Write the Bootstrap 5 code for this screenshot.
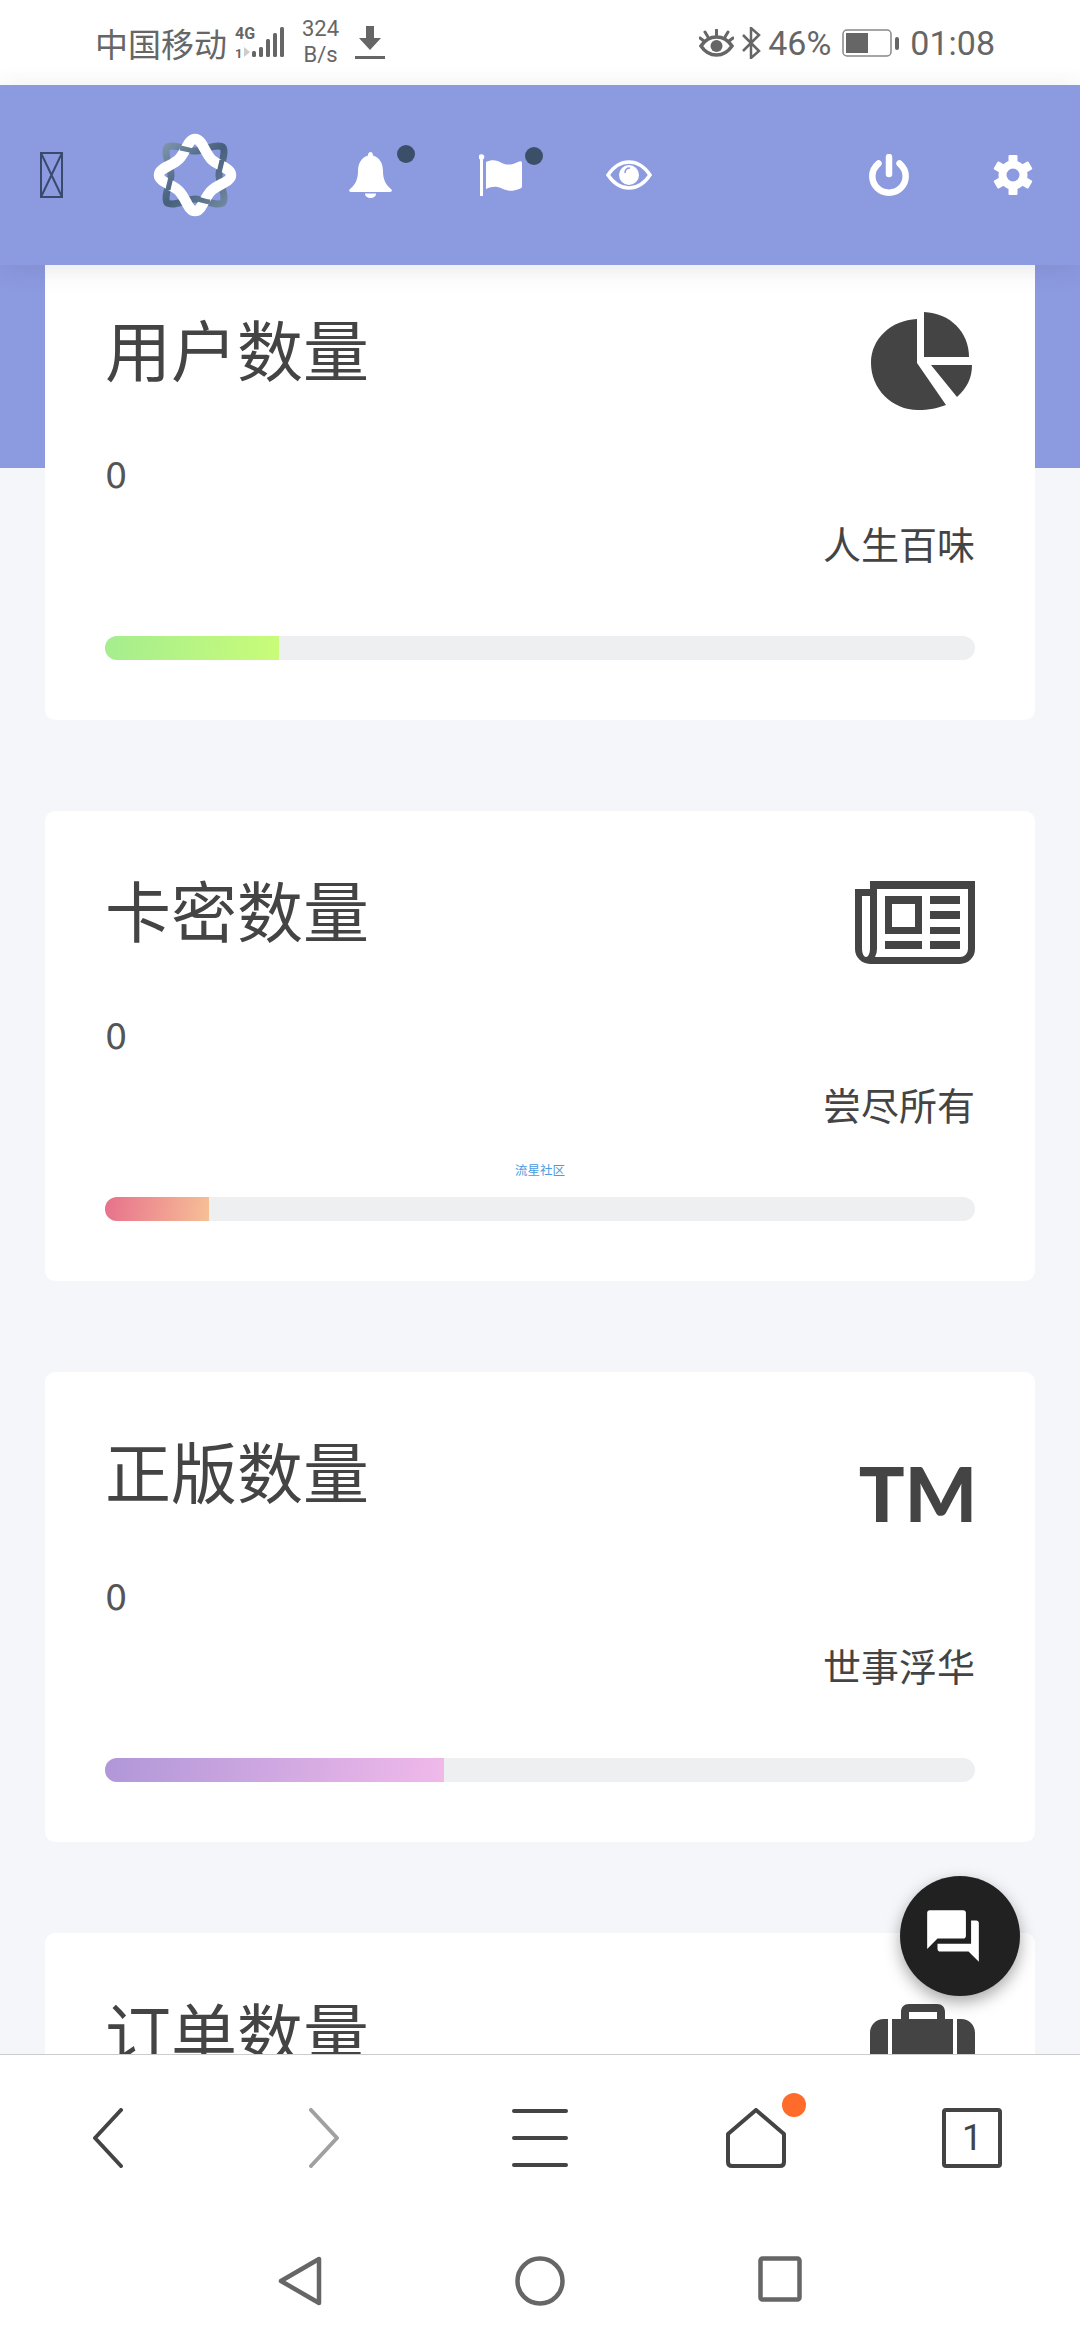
<!DOCTYPE html>
<html lang="zh-CN">
<head>
  <meta charset="UTF-8">
  <title>用户数量</title>
  <meta name="viewport" content="width=device-width, initial-scale=1">
  <link href="https://cdn.jsdelivr.net/npm/bootstrap@5.3.3/dist/css/bootstrap.min.css" rel="stylesheet">
  <style>
    body { font-family: "Noto Sans CJK SC", "Noto Sans", sans-serif; background: #fff; color: #444; }
    svg { display: block; }
    .phone { width: 1080px; height: 2340px; overflow: hidden; position: relative; }

    /* status bar */
    .status-bar { height: 85px; padding: 0 85px 0 95px; color: #666; background: #fff; font-family: Roboto, "Noto Sans CJK SC", sans-serif; font-size: 34px; }
    .carrier { font-family: "Noto Sans CJK SC", sans-serif; font-size: 33px; line-height: 48px; }
    .speed { font-size: 22px; line-height: 26px; text-align: center; margin: -2px 16px 0 17px; }
    .pct { margin: 0 11px 0 7px; line-height: 40px; }
    .clock { margin-left: 11px; line-height: 40px; }

    /* header */
    .top-head { height: 180px; background: #8c9ae0; padding: 0 47px 0 40px; position: relative; z-index: 2; box-shadow: 0 4px 24px rgba(60, 60, 80, .12); }
    .logo-slot { margin-left: 90px; }
    .bell-slot { margin-left: 112px; width: 66px; }
    .flag-slot { margin-left: 64px; width: 64px; }
    .eye-slot { margin-left: 63px; }
    .gear-slot { margin-left: 84px; }
    .unread { width: 18px; height: 18px; background: #3c4f68; top: -7px; right: 0; }

    /* content */
    .scroll-area { flex: 1 1 auto; min-height: 0; overflow: hidden; background: linear-gradient(#8c9ae0 203px, #f4f6fa 203px); padding: 0 45px; }
    .stat-list { margin-top: -15px; }
    .stat-card { height: 470px; margin-bottom: 91px; border-radius: 10px; position: relative; }
    .stat-body { padding: 60px 60px 60px; }
    .stat-head { height: 100px; }
    .stat-title { font-size: 66px; line-height: 74px; font-weight: 400; margin: 0; color: #444; }
    .stat-icon { fill: #444; }
    .pie-top { margin: 2px 2px 0 0; }
    .news-top { margin-top: 10px; }
    .case-top { margin-top: 11px; }
    .tm-mark { font-family: Lato, sans-serif; font-weight: 900; font-size: 76px; line-height: 80px; margin: 21px -2px 0 0; color: #444; }
    .stat-num { font-family: "DejaVu Sans", sans-serif; font-size: 35px; line-height: 42px; margin-top: 45px; color: #555; }
    .stat-note { font-size: 38px; line-height: 46px; font-weight: 400; margin-top: 23px; text-align: right; }
    .stat-bar { --bs-progress-height: 24px; --bs-progress-bg: #eeeff0; --bs-progress-border-radius: 12px; margin-top: 70px; }
    .fill-green { background: linear-gradient(100deg, #a5ed8f, #c9fc78); }
    .fill-red { background: linear-gradient(100deg, #e7708c, #f7c096); }
    .fill-purple { background: linear-gradient(100deg, #b097d8, #f0b9ea); }
    .water-mark { position: absolute; left: 470px; top: 351px; font-size: 12.500px; line-height: 16px; color: #4a9be0; }

    /* floating button */
    .chat-fab { position: absolute; left: 900px; top: 1876px; width: 120px; height: 120px; background: #212121; box-shadow: 0 6px 16px rgba(0, 0, 0, .35); z-index: 3; padding-right: 14px; }

    /* browser bar + system keys */
    .browser-bar { height: 286px; flex: none; background: #fff; border-top: 1px solid #ccc; padding-top: 53px; position: relative; z-index: 2; }
    .tool-row { height: 60px; }
    .tool-cell { width: 216px; }
    .tab-count { width: 60px; height: 60px; border: 4px solid #444; border-radius: 4px; font-family: Roboto, sans-serif; font-size: 36px; line-height: 1; }
    .home-dot { width: 24px; height: 24px; background: #ff6b2b; top: -15px; left: 56px; }
    .sys-row { margin-top: 88px; }
    .sys-cell { width: 240px; }
  </style>
</head>
<body>
<div class="phone d-flex flex-column">

  <!-- status bar -->
  <div class="status-bar d-flex align-items-center justify-content-between flex-shrink-0">
    <div class="d-flex align-items-center">
      <span class="carrier">中国移动</span>
      <svg class="ms-2" width="50" height="34" viewBox="0 0 50 34" fill="#666">
        <text x="0" y="13" font-family="Roboto, sans-serif" font-weight="700" font-size="16">4G</text>
        <text x="0" y="32" font-family="Roboto, sans-serif" font-weight="700" font-size="13">1</text>
        <path d="M9 21l6 5-6 5z" fill="#ccc"/>
        <rect x="17" y="25" width="4" height="6" rx="1.500"/>
        <rect x="24" y="21" width="4" height="10" rx="1.500"/>
        <rect x="31" y="13" width="4" height="18" rx="1.500"/>
        <rect x="38" y="7" width="4" height="24" rx="1.500"/>
        <rect x="45" y="1" width="4" height="30" rx="1.500"/>
      </svg>
      <div class="speed">324<br>B/s</div>
      <svg width="30" height="34" viewBox="0 0 30 34" fill="#666">
        <path d="M11 0h8v12h7L15 24 4 12h7z"/>
        <rect x="0" y="30" width="30" height="3"/>
      </svg>
    </div>
    <div class="d-flex align-items-center">
      <svg width="35" height="28" viewBox="0 0 35 28">
        <path d="M2 17c4-6 9-9 15.500-9S29 11 33 17c-4 6-9 9-15.500 9S6 23 2 17z" fill="none" stroke="#666" stroke-width="3.500"/>
        <circle cx="17.500" cy="17" r="6" fill="#666"/>
        <path d="M17.500 1v5M6 3l3 5M29 3l-3 5M1 9l4 3M34 9l-4 3" stroke="#666" stroke-width="3" stroke-linecap="round"/>
      </svg>
      <svg class="ms-2" width="19" height="32" viewBox="0 0 19 32">
        <path d="M1 8l16 16-8 7V1l8 7L1 24" fill="none" stroke="#666" stroke-width="2.500"/>
      </svg>
      <span class="pct">46%</span>
      <svg width="57" height="28" viewBox="0 0 57 28">
        <rect x="1" y="1" width="48" height="26" rx="4" fill="none" stroke="#888" stroke-width="1.500"/>
        <rect x="4" y="4" width="22" height="20" fill="#666"/>
        <rect x="53" y="8" width="4" height="13" rx="2" fill="#666"/>
      </svg>
      <span class="clock">01:08</span>
    </div>
  </div>

  <!-- header -->
  <div class="top-head d-flex align-items-center flex-shrink-0">
    <svg width="23" height="46" viewBox="0 0 23 46" fill="none" stroke="#3a4a6e" stroke-width="2">
      <rect x="1" y="1" width="21" height="44"/>
      <path d="M1 1l21 44M22 1L1 45"/>
    </svg>
    <div class="logo-slot">
      <svg width="84" height="84" viewBox="-42 -42 84 84" fill="none">
        <defs>
          <linearGradient id="twist" gradientUnits="userSpaceOnUse" x1="-30" y1="-30" x2="30" y2="30">
            <stop offset="0" stop-color="#7d93ab"/>
            <stop offset=".5" stop-color="#465f7c"/>
            <stop offset="1" stop-color="#6f879f"/>
          </linearGradient>
        </defs>
        <!-- dark ring under, white ring over, then dark again at every second crossing -->
        <path d="M0-24C8-24 14-29 23-29 28-29 29-28 29-23 29-14 24-8 24 0 24 8 29 14 29 23 29 28 28 29 23 29 14 29 8 24 0 24-8 24-14 29-23 29-28 29-29 28-29 23-29 14-24 8-24 0-24-8-29-14-29-23-29-28-28-29-23-29-14-29-8-24 0-24Z" stroke="url(#twist)" stroke-width="7"/>
        <path d="M0-36C7-36 9-24 16-16 23-9 36-7 36 0 36 7 23 9 16 16 9 23 7 36 0 36-7 36-9 23-16 16-23 9-36 7-36 0-36-7-23-9-16-16-9-23-7-36 0-36Z" stroke="#fff" stroke-width="10.500"/>
        <path d="M-15-27C-11-26.500-7-25-3-24.300M27-15C26.500-11 25-7 24.300-3M15 27C11 26.500 7 25 3 24.300M-27 15C-26.500 11-25 7-24.300 3" stroke="url(#twist)" stroke-width="5"/>
      </svg>
    </div>
    <div class="bell-slot position-relative">
      <svg width="43" height="46" viewBox="0 0 43 46" fill="#fff">
        <path d="M21.500 0c1.500 0 2.500 1.500 2.500 3.500C31 5.500 34 12 34 19c0 9 3 14 8.500 18.500.8 1 .3 2.500-1.500 2.500H2c-1.800 0-2.300-1.500-1.500-2.500C6 33 9 28 9 19 9 12 12 5.500 19 3.500 19 1.500 20 0 21.500 0z"/>
        <path d="M16 41.500h11c0 2.800-2.500 4.500-5.500 4.500S16 44.300 16 41.500z"/>
      </svg>
      <span class="unread position-absolute rounded-circle"></span>
    </div>
    <div class="flag-slot position-relative">
      <svg width="44" height="42" viewBox="0 0 44 42" fill="#fff">
        <circle cx="2.500" cy="3" r="2.800"/>
        <rect x="1" y="3" width="3" height="39"/>
        <path d="M7 8c6-3 11-2 16 1 5 2.500 10 2 16-1 2-1 4-1 4 1v23c0 2-1 2.500-3 3-6 2.500-11 2.500-17-.5-5-2.500-10-2.500-16 .5z"/>
      </svg>
      <span class="unread position-absolute rounded-circle"></span>
    </div>
    <div class="eye-slot">
      <svg width="46" height="30" viewBox="0 0 46 30">
        <path d="M2 15C8 6 14 2 23 2s15 4 21 13c-6 9-12 13-21 13S8 24 2 15z" fill="none" stroke="#fff" stroke-width="3.500"/>
        <circle cx="23" cy="15" r="10" fill="#fff"/>
        <path d="M19 13c0-3 2-5 5-5" fill="none" stroke="#8c9ae0" stroke-width="1.500"/>
      </svg>
    </div>
    <div class="ms-auto">
      <svg width="40" height="42" viewBox="0 0 40 42" fill="none" stroke="#fff" stroke-width="6.500" stroke-linecap="round">
        <path d="M20 3v17"/>
        <path d="M9.500 9.500C5.500 13 3.300 17 3.300 22c0 9.500 7.500 16.700 16.700 16.700S36.700 31.500 36.700 22c0-5-2.200-9-6.200-12.500"/>
      </svg>
    </div>
    <div class="gear-slot">
      <svg width="40" height="40" viewBox="-20 -20 40 40">
        <g fill="#fff">
          <rect x="-4.500" y="-20" width="9" height="9" rx="1"/>
          <rect x="-4.500" y="-20" width="9" height="9" rx="1" transform="rotate(60)"/>
          <rect x="-4.500" y="-20" width="9" height="9" rx="1" transform="rotate(120)"/>
          <rect x="-4.500" y="-20" width="9" height="9" rx="1" transform="rotate(180)"/>
          <rect x="-4.500" y="-20" width="9" height="9" rx="1" transform="rotate(240)"/>
          <rect x="-4.500" y="-20" width="9" height="9" rx="1" transform="rotate(300)"/>
        </g>
        <circle r="10.500" fill="none" stroke="#fff" stroke-width="8"/>
      </svg>
    </div>
  </div>

  <!-- stat cards -->
  <div class="scroll-area">
    <div class="stat-list">

      <div class="card border-0 stat-card">
        <div class="card-body stat-body">
          <div class="stat-head d-flex justify-content-between align-items-start">
            <h2 class="stat-title">用户数量</h2>
            <svg class="stat-icon pie-top" width="102" height="98" viewBox="0 0 102 98">
              <path d="M46 7V51L75 93C67 96 58 98 47 98 21 98 0 77 0 51 0 27 20 8 46 7z"/>
              <path d="M53 0C79 1 98 20 98 45H53z"/>
              <path d="M60 53H101C101 66 96 76 86 85z"/>
            </svg>
          </div>
          <div class="stat-num">0</div>
          <div class="stat-note">人生百味</div>
          <div class="progress stat-bar">
            <div class="progress-bar fill-green" style="width: 20%"></div>
          </div>
        </div>
      </div>

      <div class="card border-0 stat-card">
        <div class="card-body stat-body">
          <div class="stat-head d-flex justify-content-between align-items-start">
            <h2 class="stat-title">卡密数量</h2>
            <svg class="stat-icon news-top" width="120" height="83" viewBox="0 0 120 83" fill-rule="evenodd">
              <path d="M15 0H120V68A15 15 0 0 1 105 83H15A15 15 0 0 1 0 68V8H15ZM22 8V68Q22 72 20 76H105A8 8 0 0 0 113 68V8ZM7 15V68A4 8 0 0 0 15 68V15Z"/>
              <path d="M30 15H67V53H30ZM37 23V46H60V23Z"/>
              <path d="M30 60H67V68H30ZM75 15H105V23H75ZM75 30H105V38H75ZM75 46H105V53H75ZM75 60H105V68H75Z"/>
            </svg>
          </div>
          <div class="stat-num">0</div>
          <div class="stat-note">尝尽所有</div>
          <div class="progress stat-bar">
            <div class="progress-bar fill-red" style="width: 12%"></div>
          </div>
        </div>
        <span class="water-mark">流星社区</span>
      </div>

      <div class="card border-0 stat-card">
        <div class="card-body stat-body">
          <div class="stat-head d-flex justify-content-between align-items-start">
            <h2 class="stat-title">正版数量</h2>
            <span class="tm-mark">TM</span>
          </div>
          <div class="stat-num">0</div>
          <div class="stat-note">世事浮华</div>
          <div class="progress stat-bar">
            <div class="progress-bar fill-purple" style="width: 39%"></div>
          </div>
        </div>
      </div>

      <div class="card border-0 stat-card">
        <div class="card-body stat-body">
          <div class="stat-head d-flex justify-content-between align-items-start">
            <h2 class="stat-title">订单数量</h2>
            <svg class="stat-icon case-top" width="105" height="90" viewBox="0 0 105 90">
              <path d="M31 15V8C31 3 34 0 39 0H67C72 0 75 3 75 8V15H67V8H39V15z"/>
              <path d="M22 15H83V90H22zM0 29C0 21 6 15 14 15H18V90H14C6 90 0 84 0 76zM87 15H91C99 15 105 21 105 29V76C105 84 99 90 91 90H87z"/>
            </svg>
          </div>
          <div class="stat-num">0</div>
        </div>
      </div>

    </div>
  </div>

  <!-- floating chat button -->
  <div class="chat-fab rounded-circle d-flex align-items-center justify-content-center">
    <svg width="62" height="62" viewBox="0 0 24 24" fill="#fff">
      <path d="M21 6h-2v9H6v2c0 .55.45 1 1 1h11l4 4V7c0-.55-.45-1-1-1zm-4 6V3c0-.55-.45-1-1-1H3c-.55 0-1 .45-1 1v14l4-4h10c.55 0 1-.45 1-1z"/>
    </svg>
  </div>

  <!-- browser toolbar and system keys -->
  <div class="browser-bar">
    <div class="tool-row d-flex">
      <div class="tool-cell d-flex justify-content-center">
        <svg width="34" height="60" viewBox="0 0 34 60" fill="none" stroke="#444" stroke-width="4" stroke-linecap="round" stroke-linejoin="round"><path d="M30 2L4 30l26 28"/></svg>
      </div>
      <div class="tool-cell d-flex justify-content-center">
        <svg width="34" height="60" viewBox="0 0 34 60" fill="none" stroke="#a0a0a0" stroke-width="4" stroke-linecap="round" stroke-linejoin="round"><path d="M4 2l26 28L4 58"/></svg>
      </div>
      <div class="tool-cell d-flex justify-content-center">
        <svg width="56" height="60" viewBox="0 0 56 60" fill="#444">
          <rect y="1" width="56" height="4" rx="2"/>
          <rect y="28" width="56" height="4" rx="2"/>
          <rect y="55" width="56" height="4" rx="2"/>
        </svg>
      </div>
      <div class="tool-cell d-flex justify-content-center">
        <div class="position-relative">
          <svg width="60" height="60" viewBox="0 0 60 60" fill="none" stroke="#444" stroke-width="4" stroke-linejoin="round"><path d="M30 2L58 26V54Q58 58 54 58H6Q2 58 2 54V26z"/></svg>
          <span class="home-dot position-absolute rounded-circle"></span>
        </div>
      </div>
      <div class="tool-cell d-flex justify-content-center">
        <div class="tab-count d-flex align-items-center justify-content-center">1</div>
      </div>
    </div>
    <div class="sys-row d-flex justify-content-center">
      <div class="sys-cell d-flex justify-content-center">
        <svg width="44" height="50" viewBox="0 0 44 50" fill="none" stroke="#666" stroke-width="4.500" stroke-linejoin="round"><path d="M41 3V47L3 25z"/></svg>
      </div>
      <div class="sys-cell d-flex justify-content-center">
        <svg width="50" height="50" viewBox="0 0 50 50" fill="none" stroke="#666" stroke-width="4.500"><circle cx="25" cy="25" r="22.500"/></svg>
      </div>
      <div class="sys-cell d-flex justify-content-center">
        <svg width="44" height="46" viewBox="0 0 44 46" fill="none" stroke="#666" stroke-width="4.500" stroke-linejoin="round"><rect x="2.500" y="2.500" width="39" height="41" rx="2"/></svg>
      </div>
    </div>
  </div>

</div>
<script src="https://cdn.jsdelivr.net/npm/bootstrap@5.3.3/dist/js/bootstrap.bundle.min.js"></script>
</body>
</html>
